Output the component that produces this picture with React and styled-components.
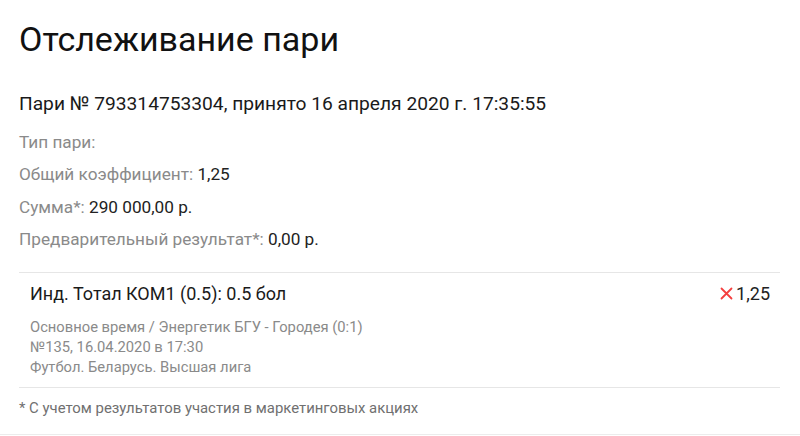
import React from 'react'
import styled, { createGlobalStyle } from 'styled-components'

const GlobalStyle = createGlobalStyle`
  html, body {
    margin: 0;
    padding: 0;
    background: #fff;
    font-family: Roboto, "Noto Sans", Arial, sans-serif;
    color: #222;
  }
`

const Page = styled.div`
  padding: 19px 20px 16px 19px;
  border-bottom: 1px solid #ececec;
`

const Title = styled.h1`
  margin: 0;
  font-size: 34px;
  line-height: 40px;
  font-weight: 400;
  color: #111;
`

const BetNumber = styled.div`
  margin-top: 33px;
  font-size: 19.2px;
  line-height: 24px;
  color: #1a1a1a;
`

const Details = styled.div`
  margin-top: 15.5px;
  display: flex;
  flex-direction: column;
  gap: 12.5px;
`

const Row = styled.div`
  font-size: 17.2px;
  line-height: 20px;
  color: #8a8a8a;
  span {
    color: #222;
  }
`

const Outcomes = styled.div`
  margin-top: 22.5px;
  border-top: 1px solid #e6e6e6;
  border-bottom: 1px solid #e6e6e6;
`

const Outcome = styled.div`
  display: flex;
  justify-content: space-between;
  align-items: flex-start;
  padding: 10px 10px 10px 11px;
`

const OutcomeBody = styled.div`
  display: flex;
  flex-direction: column;
  gap: 12px;
`

const Market = styled.div`
  font-size: 18px;
  line-height: 22px;
  color: #1a1a1a;
`

const Event = styled.div`
  font-size: 14.75px;
  line-height: 20px;
  color: #8a8a8a;
`

const Odds = styled.div`
  display: flex;
  align-items: center;
  gap: 3px;
  font-size: 18px;
  line-height: 22px;
  color: #222;
`

const Note = styled.div`
  margin-top: 10px;
  font-size: 14.9px;
  line-height: 20px;
  color: #707070;
`

const LostMark = () => (
  <svg width="13" height="13" viewBox="0 0 13 13">
    <path d="M1.5 1.5 L11.5 11.5 M11.5 1.5 L1.5 11.5" stroke="#f43f3f" strokeWidth="1.8" strokeLinecap="round" />
  </svg>
)

const details = [
  { label: 'Тип пари:', value: '' },
  { label: 'Общий коэффициент:', value: '1,25' },
  { label: 'Сумма*:', value: '290 000,00 р.' },
  { label: 'Предварительный результат*:', value: '0,00 р.' },
]

export default function App() {
  return (
    <>
      <GlobalStyle />
      <Page>
        <Title>Отслеживание пари</Title>
        <BetNumber>Пари № 793314753304, принято 16 апреля 2020 г. 17:35:55</BetNumber>
        <Details>
          {details.map(({ label, value }) => (
            <Row key={label}>
              {label}{value && <span> {value}</span>}
            </Row>
          ))}
        </Details>
        <Outcomes>
          <Outcome>
            <OutcomeBody>
              <Market>Инд. Тотал КОМ1 (0.5): 0.5 бол</Market>
              <Event>
                Основное время / Энергетик БГУ - Городея (0:1)<br />
                №135, 16.04.2020 в 17:30<br />
                Футбол. Беларусь. Высшая лига
              </Event>
            </OutcomeBody>
            <Odds>
              <LostMark />
              1,25
            </Odds>
          </Outcome>
        </Outcomes>
        <Note>* С учетом результатов участия в маркетинговых акциях</Note>
      </Page>
    </>
  )
}
